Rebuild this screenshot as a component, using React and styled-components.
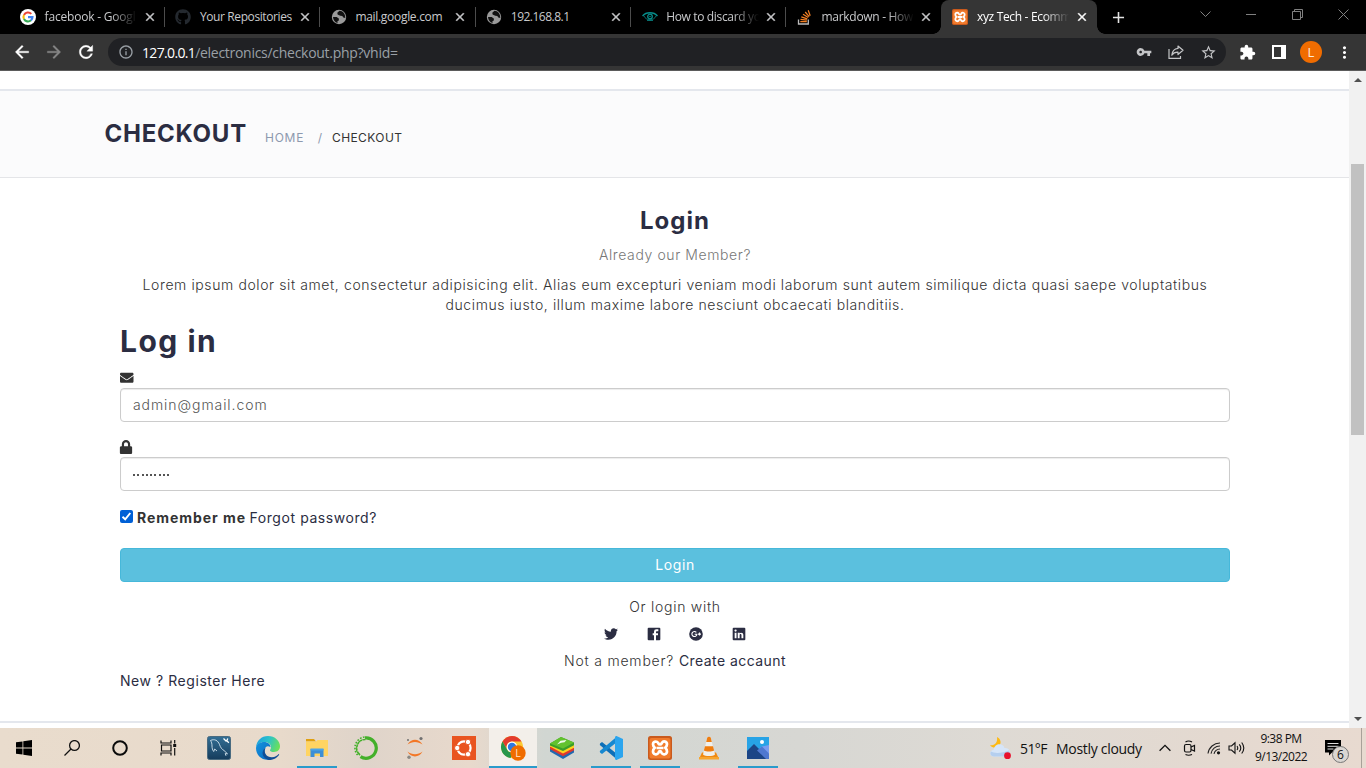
import React from "react";
import styled, { createGlobalStyle } from "styled-components";
import { FaGithub, FaEnvelope, FaLock, FaTwitter } from "react-icons/fa";
import { MdVpnKey, MdExtension, MdStarBorder, MdRefresh, MdArrowBack, MdArrowForward, MdClose, MdAdd, MdMoreVert, MdInfoOutline } from "react-icons/md";

const GlobalStyle = createGlobalStyle`
  * { box-sizing: border-box; }
  body { margin: 0; overflow: hidden; background: #fff; }
  svg { display: block; flex: none; }
`;

const ui = `"Open Sans", "Noto Sans", sans-serif`;
const brand = `Inter, "Open Sans", sans-serif`;

const Screen = styled.div`
  width: 1366px;
  height: 768px;
  display: flex;
  flex-direction: column;
  overflow: hidden;
`;

/* ---------- browser chrome ---------- */
const TabStrip = styled.div`
  height: 34px;
  background: #000;
  display: flex;
  padding-left: 9px;
  font-family: ${ui};
`;
const Tab = styled.div`
  width: 155.4px;
  flex: none;
  height: 34px;
  padding: 0 7px 0 11px;
  display: flex;
  align-items: center;
  position: relative;
  color: ${(p) => (p.$active ? "#fff" : "#c9cacc")};
  background: ${(p) => (p.$active ? "#353535" : "transparent")};
  border-radius: 8px 8px 0 0;
  &::before, &::after {
    content: "";
    display: ${(p) => (p.$active ? "block" : "none")};
    position: absolute;
    bottom: 0;
    width: 8px;
    height: 8px;
  }
  &::before { left: -8px; background: radial-gradient(circle at 0 0, transparent 7.5px, #353535 8px); }
  &::after { right: -8px; background: radial-gradient(circle at 100% 0, transparent 7.5px, #353535 8px); }
`;
const TabDivider = styled.i`
  position: absolute;
  right: -0.5px;
  top: 7px;
  width: 1px;
  height: 20px;
  background: #4c4c4c;
`;
const TabIcon = styled.span`
  width: 16px;
  height: 16px;
  margin-right: 8px;
  display: grid;
  place-items: center;
`;
const TabTitle = styled.span`
  width: 93px;
  padding-left: 0.6px;
  font-size: 12px;
  line-height: 18px;
  letter-spacing: ${(p) => p.$ls}px;
  white-space: nowrap;
  margin-top: -1px;
  mask-image: ${(p) => (p.$fade ? "linear-gradient(90deg, #000 72%, transparent 100%)" : "none")};
`;
const TabClose = styled.span`
  margin-left: 5.5px;
  width: 12px;
  display: grid;
  place-items: center;
  path:not([fill="none"]) { stroke: currentColor; stroke-width: 0.8; }
`;
const NewTab = styled.div`
  width: 28px;
  margin-left: 8px;
  display: grid;
  place-items: center;
  color: #e4e4e4;
`;
const WindowButtons = styled.div`
  margin-left: auto;
  width: 184px;
  height: 28px;
  display: grid;
  grid-template-columns: repeat(4, 46px);
  place-items: center;
  svg { fill: none; stroke: #808080; stroke-width: 1; }
`;
const Toolbar = styled.div`
  height: 37px;
  flex: none;
  background: #353535;
  border-bottom: 1px solid #5b5b5b;
  display: flex;
  align-items: center;
  padding: 0 12px;
  color: #fff;
  font-family: ${ui};
`;
const NavButton = styled.span`
  width: 32px;
  margin-left: ${(p) => (p.$first ? -6 : 0)}px;
  display: grid;
  place-items: center;
  color: ${(p) => (p.$dim ? "#868686" : "#fff")};
  path:not([fill="none"]) { stroke: currentColor; stroke-width: 0.4; }
`;
const AddressBar = styled.div`
  width: 1118px;
  flex: none;
  height: 28px;
  margin-left: 6px;
  border-radius: 14px;
  background: #202124;
  display: flex;
  align-items: center;
  padding: 0 9px 0 10px;
  color: #9aa0a6;
`;
const Host = styled.span`
  color: #fff;
  font-size: 14px;
  letter-spacing: -0.66px;
  margin-left: 8px;
`;
const Path = styled.span`
  font-size: 14px;
  letter-spacing: -0.28px;
`;
const AddressTools = styled.div`
  margin-left: auto;
  display: flex;
  gap: 16px;
  color: #c4c5c7;
`;
const ToolbarEnd = styled.div`
  display: flex;
  align-items: center;
  margin-left: 13px;
`;
const Extension = styled.span`
  margin-right: 16px;
`;
const Avatar = styled.span`
  width: 22px;
  height: 22px;
  margin: 0 13px 0 14px;
  border-radius: 50%;
  background: #f06c00;
  color: #ffe9d6;
  font: 13px/22px ${ui};
  text-align: center;
`;

/* ---------- page ---------- */
const Viewport = styled.div`
  height: 657px;
  display: flex;
  background: #fff;
`;
const Page = styled.main`
  flex: 1;
  font-family: ${brand};
  font-size: 14px;
  line-height: 20px;
  color: #333;
`;
const HeaderEdge = styled.div`
  height: 20px;
  border-bottom: 2px solid #e4e7ed;
`;
const Breadcrumb = styled.section`
  height: 87px;
  padding: 1px 0 0 104.500px;
  background: #fbfbfc;
  border-bottom: 1px solid #e4e5e8;
  display: flex;
  align-items: baseline;
`;
const PageTitle = styled.h3`
  width: 160.500px;
  margin: 0;
  font-weight: 700;
  font-size: 24px;
  line-height: 84px;
  letter-spacing: 0.75px;
  color: #2b2d42;
`;
const Crumb = styled.span`
  font-size: 12px;
  letter-spacing: ${(p) => p.$ls || 0}px;
  color: ${(p) => (p.$current ? "#333" : "#8d99ae")};
  margin-right: ${(p) => p.$gap || 0}px;
`;
const Content = styled.section`
  width: 1110px;
  margin-left: 120px;
  height: 543px;
  padding-top: 30px;
  display: flex;
  flex-direction: column;
`;
const Heading = styled.h3`
  margin: 0;
  font-weight: ${(p) => (p.$large ? 700 : 650)};
  font-size: ${(p) => (p.$large ? 30 : 24)}px;
  line-height: ${(p) => (p.$large ? 34 : 26)}px;
  letter-spacing: ${(p) => (p.$large ? 1.5 : 1)}px;
  text-align: ${(p) => (p.$large ? "left" : "center")};
  color: #2b2d42;
  margin-top: ${(p) => (p.$large ? 9 : 0)}px;
`;
const Line = styled.p`
  margin: ${(p) => p.$top || 0}px 0 0;
  text-align: ${(p) => p.$align || "center"};
  font-weight: 300;
  letter-spacing: ${(p) => p.$ls || 0.6}px;
  white-space: nowrap;
  color: ${(p) => (p.$muted ? "#777" : "#333")};
`;
const Anchor = styled.a`
  font-weight: 400;
  letter-spacing: ${(p) => p.$ls}px;
  color: #2b2d42;
`;
const FieldIcon = styled.span`
  height: 20px;
  margin-top: ${(p) => p.$top}px;
  margin-left: ${(p) => p.$left || 0}px;
  display: flex;
  align-items: center;
  color: #333;
`;
const Field = styled.div`
  height: 34px;
  border: 1px solid #ccc;
  border-radius: 4px;
  box-shadow: inset 0 1px 1px rgba(0, 0, 0, 0.075);
  padding: 6px 12px;
  font-weight: 300;
  letter-spacing: 0.93px;
  color: #555;
`;
const Dots = styled.span`
  display: flex;
  gap: 2.25px;
  margin-top: 10px;
  i { width: 2px; height: 2px; background: #555; }
`;
const RememberRow = styled.div`
  height: 20px;
  margin-top: 17px;
  display: flex;
  align-items: center;
`;
const Checkbox = styled.span`
  width: 13px;
  height: 13px;
  margin: -3px 4px 0 0;
  border-radius: 2px;
  background: #0060d6;
  display: grid;
  place-items: center;
`;
const Remember = styled.b`
  letter-spacing: 0.95px;
  font-weight: 700;
  margin-right: 3.5px;
`;
const LoginButton = styled.button`
  height: 34px;
  flex: none;
  margin-top: 20px;
  border: 1px solid #46b8da;
  border-radius: 4px;
  background: #5bc0de;
  color: #fff;
  font: 400 14px/20px ${brand};
  letter-spacing: 0.6px;
`;
const Social = styled.div`
  height: 20px;
  margin-top: 7px;
  padding-left: 1px;
  display: flex;
  justify-content: center;
  align-items: center;
  gap: 27.700px;
  color: #2b2d42;
`;
const FooterEdge = styled.div`
  height: 2px;
  background: #e4e7ed;
`;
const Scrollbar = styled.div`
  width: 17px;
  background: #f1f1f1;
  display: flex;
  flex-direction: column;
  align-items: center;
`;
const Thumb = styled.div`
  width: 13px;
  height: 271px;
  margin: 82px 0 auto;
  background: #c1c1c1;
`;
const Arrow = styled.i`
  width: 0;
  height: 0;
  margin: ${(p) => (p.$up ? "7px 0 0" : "0 0 7px")};
  border: 4px solid transparent;
  border-top: ${(p) => (p.$up ? "0" : "4px solid #505050")};
  border-bottom: ${(p) => (p.$up ? "4px solid #505050" : "0")};
`;

/* ---------- taskbar ---------- */
const Taskbar = styled.footer`
  height: 40px;
  display: flex;
  font-family: ${ui};
  color: #111;
  background: linear-gradient(90deg, #e9dccd 0, #e8dacb 280px, #dfd4ca 365px, #e8d9cc 470px, #d1d6d2 545px, #d7d7d3 800px, #dedad4 1000px, #e4d9d0 1220px, #e8dad0 100%);
`;
const SystemButton = styled.div`
  width: 48px;
  display: grid;
  place-items: center;
`;
const AppButton = styled.div`
  width: 48px;
  margin-right: 1px;
  display: grid;
  place-items: center;
  background: ${(p) => (p.$active ? "#f3efea" : "transparent")};
  position: relative;
  &::after {
    content: "";
    display: ${(p) => (p.$open ? "block" : "none")};
    position: absolute;
    bottom: 0;
    left: ${(p) => (p.$active ? 0 : 4)}px;
    right: ${(p) => (p.$active ? 0 : 4)}px;
    height: 2px;
    background: #2a9bcb;
  }
`;
const Apps = styled.div`
  display: flex;
  margin-left: 3px;
`;
const Tray = styled.div`
  display: flex;
  align-items: center;
  margin-left: auto;
`;
const Weather = styled.div`
  display: flex;
  align-items: center;
  font-size: 14px;
  letter-spacing: -0.3px;
  white-space: nowrap;
`;
const Temp = styled.span`
  width: 36px;
  margin-left: 8px;
  letter-spacing: -0.6px;
`;
const Summary = styled.span`
  width: 100px;
`;
const TrayIcons = styled.div`
  display: flex;
  align-items: center;
`;
const TrayIcon = styled.span`
  width: ${(p) => p.$w}px;
  display: grid;
  place-items: center;
`;
const Clock = styled.div`
  width: 62px;
  font-size: 12px;
  line-height: 18px;
  text-align: center;
  letter-spacing: -0.52px;
  white-space: nowrap;
`;
const Notifications = styled.div`
  width: 48px;
  height: 40px;
  margin-left: 1px;
  padding: 12px 0 0 12px;
  position: relative;
`;
const Count = styled.span`
  position: absolute;
  left: 19px;
  top: 18px;
  width: 17px;
  height: 17px;
  border-radius: 50%;
  border: 1px solid #777;
  background: #dad6d2;
  font: 12px/15px ${ui};
  text-align: center;
`;
const DesktopEdge = styled.i`
  width: 5px;
  height: 40px;
  border-left: 1px solid #a9a199;
`;

/* ---------- drawings ---------- */
const Google = () => (
  <svg width="16" height="16" viewBox="0 0 16 16" fill="none" strokeWidth="2.1">
    <circle cx="8" cy="8" r="8" fill="#fff" />
    <path d="M11.3 4.9A4.5 4.5 0 0 0 4 6" stroke="#ea4335" />
    <path d="M4 5.9a4.5 4.5 0 0 0 0 4.2" stroke="#fbbc05" />
    <path d="M4 10a4.5 4.5 0 0 0 7 1.3" stroke="#34a853" />
    <path d="M8 8.1h4.5c0 1.400-.5 2.400-1.500 3.300" stroke="#4285f4" />
  </svg>
);
const Globe = () => (
  <svg width="16" height="16" viewBox="0 0 16 16">
    <circle cx="8" cy="8" r="7.200" fill="#9a9a9a" />
    <path d="M8.500 1.800L6.300 3.800l.3 1.700 2.700 1.300 2 .1 1 1.600 2 .4c.1-3-1.500-5.600-3.500-6.600zM2 7.900l3.700.2 2.300 1.600-.4 2-1.200.6.2 1.600C3.800 13.100 2.100 10.800 2 7.900z" fill="#111" />
  </svg>
);
const Eye = () => (
  <svg width="16" height="12" viewBox="0 0 16 12" fill="none" stroke="#078d8b">
    <path d="M.5 5C4 .7 12 .7 15.500 5" strokeWidth="1.500" />
    <path d="M2 5c2 5 10 5 12 0" strokeWidth=".8" />
    <circle cx="8" cy="5.500" r="2.300" strokeWidth="1.300" />
    <circle cx="8" cy="5.500" r=".8" fill="#078d8b" stroke="none" />
    <path d="M5 9.500h6" strokeWidth=".8" />
  </svg>
);
const StackOverflow = () => (
  <svg width="16" height="16" viewBox="0 0 16 16" fill="none">
    <path d="M1.500 10.500v4.500h9.800v-4.500" stroke="#bcbbbb" strokeWidth="1.300" />
    <path d="M3.300 12.700h6.500M3.500 10.400l6.300.8M4.300 7.900l6 1.900M6 5.200l5.300 3.300M8.200 3l4 4.600M11.200 1.300l2 5.400" stroke="#f48024" strokeWidth="1.250" />
  </svg>
);
const Xampp = ({ size }) => (
  <svg width={size} height={size} viewBox="0 0 24 24">
    <rect width="24" height="24" rx="2.500" fill="#c95a1d" />
    <rect x="1.500" y="2" width="21" height="20.500" rx="2" fill="#f17b2c" />
    <path d="M7.700 5.500a2.700 2.700 0 0 0-2.700 2.700c0 1.700.900 2.800 1.800 3.600C5.700 12.700 5 13.800 5 15.500a2.900 2.900 0 0 0 5.400 1.400c.5-.9.300-1.700 1.600-1.700s1.100.8 1.600 1.700a2.900 2.900 0 0 0 5.400-1.400c0-1.700-.7-2.800-1.800-3.700.900-.8 1.800-1.900 1.800-3.600a2.700 2.700 0 0 0-5-1.400c-.5.800-.6 1.600-2 1.600s-1.500-.8-2-1.600a2.700 2.700 0 0 0-2.300-1.300zM8.500 12h7" fill="none" stroke="#fff" strokeWidth="2.700" strokeLinejoin="round" />
  </svg>
);
const Share = () => (
  <svg width="16" height="16" viewBox="0 0 16 16" fill="none" stroke="#c4c5c7" strokeWidth="1.200">
    <path d="M1 5v9.400h11.500V12" />
    <path d="M10 2l5 4.300-5 4.200V8.200C7 8.100 5.200 9 3.800 11.200 4.200 7.500 6 4.800 10 4.400z" strokeLinejoin="round" />
  </svg>
);
const SidePanel = () => (
  <svg width="14" height="14" viewBox="0 0 14 14">
    <path d="M0 0h14v14H0z" fill="#fff" />
    <path d="M2 2h7v10H2z" fill="#353535" />
  </svg>
);
const FacebookBox = () => (
  <svg width="16" height="16" viewBox="0 0 24 24" fill="currentColor">
    <path d="M4 2.500H20A1.500 1.500 0 0 1 21.500 4V20A1.500 1.500 0 0 1 20 21.500H4A1.500 1.500 0 0 1 2.500 20V4A1.500 1.500 0 0 1 4 2.500M18.500 5H15.500A3.500 3.500 0 0 0 12 8.500V11H10V14H12V21.500H15V14H18V11H15V9A1 1 0 0 1 16 8H18.500V5Z" />
  </svg>
);
const GooglePlus = () => (
  <svg width="14" height="14" viewBox="0 0 14 14" fill="none">
    <circle cx="7" cy="7" r="6.800" fill="#2b2d42" />
    <path d="M7.300 5.400A2.500 2.500 0 1 0 7.900 7.200H5.600M9 7.100h3M10.500 5.600v3" stroke="#fff" strokeWidth="1.150" />
  </svg>
);
const LinkedinBox = () => (
  <svg width="16" height="16" viewBox="0 0 24 24" fill="currentColor">
    <path d="M20 2.500A1.500 1.500 0 0 1 21.500 4V20A1.500 1.500 0 0 1 20 21.500H4A1.500 1.500 0 0 1 2.500 20V4A1.500 1.500 0 0 1 4 2.500H20M18.500 18.500V13.200A3.260 3.260 0 0 0 15.240 9.940C14.390 9.940 13.400 10.460 12.920 11.240V10.130H10.130V18.500H12.920V13.570C12.920 12.800 13.540 12.170 14.310 12.170A1.400 1.400 0 0 1 15.710 13.570V18.500H18.500M6.880 8.560A1.680 1.680 0 0 0 8.560 6.880C8.560 5.950 7.810 5.190 6.880 5.190A1.690 1.690 0 0 0 5.190 6.880C5.190 7.810 5.950 8.560 6.880 8.560M8.270 18.500V10.130H5.500V18.500H8.270Z" />
  </svg>
);
const Windows = () => (
  <svg width="16" height="16" viewBox="0 0 16 16">
    <path d="M0 2.300l6.500-.9v6.200H0zM7.300 1.200L16 0v7.600H7.300zM0 8.400h6.500v6.200L0 13.700zM7.300 8.400H16V16l-8.700-1.200z" />
  </svg>
);
const Search = () => (
  <svg width="16" height="16" viewBox="0 0 16 16" fill="none" stroke="#111" strokeWidth="1.300">
    <circle cx="10.500" cy="5.500" r="4.900" />
    <path d="M7 9L.5 15.500" />
  </svg>
);
const Cortana = () => (
  <svg width="16" height="16" viewBox="0 0 16 16" fill="none" stroke="#0b0b0b" strokeWidth="2">
    <circle cx="8" cy="8" r="6.800" />
  </svg>
);
const TaskView = () => (
  <svg width="17" height="16" viewBox="0 0 17 16" fill="none" stroke="#111" strokeWidth="1.200">
    <path d="M1 .5v2.500h10V.5M1 15.500V13h10v2.500M1.500 5h9.500v6H1.500zM14.700 0v3.500M14.700 8v7.500" />
    <path d="M13.200 4h3v3h-3z" fill="#111" stroke="none" />
  </svg>
);
const Workbench = () => (
  <svg width="24" height="24" viewBox="0 0 24 24">
    <defs><linearGradient id="wb" x2="0" y2="1"><stop stopColor="#336f95" /><stop offset="1" stopColor="#153c5c" /></linearGradient></defs>
    <rect x=".5" y=".5" width="23" height="23" rx="2" fill="url(#wb)" stroke="#4a6b80" />
    <path d="M3.500 4.500c4-2 7.500 0 9 4 1 3 2.500 5 4.500 6l3.500 3.300-2.300-.2.800 2.200M3.500 4.500c1 1.500 1.500 3 1.500 5.500 0 2 .5 4 1.700 5.500l1-2.500 2.300 2" fill="none" stroke="#d5e4ee" strokeWidth=".9" />
    <path d="M16.500 2.500l3 3M20.800 2.500l-1 2.200 2 2" fill="none" stroke="#fff" strokeWidth="1.300" />
  </svg>
);
const Edge = () => (
  <svg width="24" height="24" viewBox="0 0 24 24">
    <defs>
      <linearGradient id="e1" x1="0" y1=".2" x2="1" y2=".5"><stop stopColor="#1b9de2" /><stop offset=".5" stopColor="#2cc3c9" /><stop offset="1" stopColor="#6ae05a" /></linearGradient>
      <linearGradient id="e2" x2="1" y2="1"><stop stopColor="#1494df" /><stop offset="1" stopColor="#0b66bd" /></linearGradient>
    </defs>
    <path d="M0 11.500C.5 4.500 5.500 0 12 0c7 0 12 5 12 10.300 0 3.700-2.800 5.700-6 5.700-2.500 0-4-.8-4-1.800 0-.7 1-1.200 1-3C15 8.500 12.500 6 8.500 6 4 6 1 8.500 0 11.500z" fill="url(#e1)" />
    <path d="M0 12c.4-4 4.500-6 8-6 4 0 6.500 2.500 6.500 5.200C12 9 8.500 10.500 8.500 14.500c0 4 3 7.500 6.500 8.800C7 25.500 0 20 0 12z" fill="url(#e2)" />
    <path d="M9.500 12c-2.500 5 1.500 9.500 6.500 9.300 3-.1 5.200-1.500 6.500-3 .5-.6.900-.2.500.6C21 22 17 24 12.500 24 8 22.500 5.500 18.500 7 15c.5-1.500 1.300-2.400 2.500-3z" fill="#124d96" />
  </svg>
);
const Explorer = () => (
  <svg width="22" height="20" viewBox="0 0 22 20">
    <path d="M0 1h8l2 2.500H0z" fill="#e0a010" />
    <path d="M0 3.500h10L11.500 2H22v16H0z" fill="#ffd462" />
    <path d="M4.500 19v-8h13v8h-3.500v-3.500H8.500V19z" fill="#3c8fd6" />
    <path d="M4.500 10.500h13v2h-13z" fill="#4ba4e8" />
  </svg>
);
const Anaconda = () => (
  <svg width="24" height="24" viewBox="0 0 24 24" fill="none" stroke="#43b02a">
    <path d="M11 1.900a10.200 10.200 0 1 1-4.500 18.700" strokeWidth="3.200" />
    <path d="M11.500 3.500A8.700 8.700 0 0 0 6 19" strokeWidth="1.600" />
    <path d="M10.500 1A11 11 0 0 0 4.500 20" strokeWidth="1.600" strokeDasharray="1.600 1.500" />
    <path d="M9 4A9 9 0 0 0 4 16" strokeWidth="1" stroke="#e4d7cb" strokeDasharray="1 2.200" />
  </svg>
);
const Jupyter = () => (
  <svg width="20" height="24" viewBox="0 0 20 24">
    <path d="M2.500 8.500C6 2 14 2 17.500 8.500 13 5 7 5 2.500 8.500zM2.500 15.500C6 22 14 22 17.500 15.500 13 19 7 19 2.500 15.500z" fill="#f37726" />
    <circle cx="16" cy="2.500" r="1.600" fill="#707070" /><circle cx="4" cy="21.200" r="1.700" fill="#8b8883" /><circle cx="3" cy="4" r="1" fill="#707070" />
  </svg>
);
const Ubuntu = () => (
  <svg width="24" height="24" viewBox="0 0 24 24">
    <path d="M0 0h24v24H0z" fill="#e95420" />
    <circle cx="12" cy="12" r="6.600" fill="none" stroke="#fff" strokeWidth="2.200" />
    {[[5.200, 12], [16, 6], [16, 18.200]].map(([x, y]) => <circle key={x + "-" + y} cx={x} cy={y} r="2.700" fill="#fff" stroke="#e95420" strokeWidth=".9" />)}
  </svg>
);
const Chrome = () => (
  <svg width="26" height="26" viewBox="0 0 26 26">
    <circle cx="12" cy="12" r="11" fill="#fcc934" />
    <path d="M2.500 6.500A11 11 0 0 1 21.500 6.500H12a5.500 5.500 0 0 0-4.800 8.200z" fill="#e33b2e" />
    <path d="M2.500 6.500l4.700 8.200A5.500 5.500 0 0 0 14 17l-3.500 6A11 11 0 0 1 2.500 6.500z" fill="#27964b" />
    <circle cx="12" cy="12" r="5.400" fill="#fff" /><circle cx="12" cy="12" r="4.200" fill="#3178e0" />
    <circle cx="18" cy="18" r="7.700" fill="#f06c00" />
    <text x="18" y="22" textAnchor="middle" fontFamily="Open Sans" fontSize="10.500" fill="#ffe6cf">L</text>
  </svg>
);
const BlueStacks = () => (
  <svg width="24" height="24" viewBox="0 0 24 24">
    <path d="M0 15.500l13 7.500 11-6.500v-3L0 13z" fill="#2268b0" />
    <path d="M0 13l13 7.300 11-6v-2.500L0 10.500z" fill="#e03a2d" />
    <path d="M0 10.500l13 7 11-5.700V9L0 8.500z" fill="#fdd11f" />
    <path d="M0 7.500L11 1l13 5.500v2.700L13 15 0 9.500z" fill="#3a9e2a" />
    <path d="M0 7.500L11 1l13 5.500-11 6z" fill="#62c22e" />
    <path d="M7 8.500l3.500-3.800 6-.7-2 2.300-3.300.4z" fill="#effae9" />
  </svg>
);
const VsCode = () => (
  <svg width="24" height="24" viewBox="0 0 24 24">
    <path d="M1 7.500l2-1.500 15 12v5.500L.8 9z" fill="#0d6fb8" />
    <path d="M1 16.500L3 18 18 6V.5L.8 15z" fill="#1688d0" />
    <path d="M17.500 0L24 3v18l-6.500 3c-1 0-1.500-.7-1.500-1.500v-21C16 .700 16.500 0 17.500 0z" fill="#2ba5ee" />
  </svg>
);
const Vlc = () => (
  <svg width="22" height="24" viewBox="0 0 22 24">
    <path d="M4 16.500h14l3 6.500H1z" fill="#f08a12" />
    <path d="M9.500 1h3l4.500 17.500c-2 2-10 2-12 0z" fill="#f1f0ec" />
    <path d="M9.300 1.500c.5-1 2.900-1 3.400 0L13.800 6H8.200zM7 10.200h8l1.100 4.300c-2.500 1.300-7.700 1.300-10.200 0z" fill="#ef7d10" />
    <path d="M1 21h20v2.500H1z" fill="#f7a52e" />
  </svg>
);
const Photos = () => (
  <svg width="22" height="22" viewBox="0 0 22 22">
    <path d="M0 0h22v22H0z" fill="#27a3e6" />
    <path d="M22 8v12l-9-9 2-1.500z" fill="#7a9cf0" />
    <path d="M0 14L7 7l15 15H0z" fill="#1c4586" />
    <path d="M10 13.500l5-4 7 7V22h-3z" fill="#4f78d0" />
    <circle cx="15" cy="5" r="2" fill="#fff" />
  </svg>
);
const CloudMoon = () => (
  <svg width="24" height="24" viewBox="0 0 24 24">
    <path d="M9 1c3.500 1.500 5 6 2 9-2.500 2.500-7 2-9-.7C7.500 9.500 9.800 6 9 1z" fill="#fdb913" />
    <path d="M6 20.500c-5 0-5-6.500-.3-6.800C6.500 7 15 6.500 16.500 12c5-.5 6.500 4 4.500 6.500-1 1.500-2 2-4 2z" fill="#d6e5f8" />
    <path d="M6 20.500c-3 0-4.500-3-3-5 3 2 11 2 18-1 1.300 3 0 6-4 6z" fill="#b5cfef" />
    <circle cx="19.500" cy="19.700" r="3.400" fill="#e8112d" />
  </svg>
);

const tabs = [
  { title: "facebook - Googl", icon: <Google />, ls: -0.2, fade: true },
  { title: "Your Repositories", icon: <FaGithub size={16} color="#24292f" />, ls: -0.4 },
  { title: "mail.google.com", icon: <Globe />, ls: -0.3 },
  { title: "192.168.8.1", icon: <Globe />, ls: -0.5 },
  { title: "How to discard yo", icon: <Eye />, ls: -0.34, fade: true },
  { title: "markdown - How", icon: <StackOverflow />, ls: -0.3, fade: true },
  { title: "xyz Tech - Ecomm", icon: <Xampp size={16} />, ls: -0.33, fade: true, active: true },
];

const apps = [
  { icon: <Workbench /> },
  { icon: <Edge /> },
  { icon: <Explorer />, open: true },
  { icon: <Anaconda /> },
  { icon: <Jupyter /> },
  { icon: <Ubuntu /> },
  { icon: <Chrome />, open: true, active: true },
  { icon: <BlueStacks /> },
  { icon: <VsCode />, open: true },
  { icon: <Xampp size={24} />, open: true },
  { icon: <Vlc /> },
  { icon: <Photos />, open: true },
];

export default function App() {
  return (
    <Screen>
      <GlobalStyle />
      <TabStrip>
        {tabs.map((t, i) => (
          <Tab key={t.title} $active={t.active}>
            <TabIcon>{t.icon}</TabIcon>
            <TabTitle $ls={t.ls} $fade={t.fade}>{t.title}</TabTitle>
            <TabClose><MdClose size={14} /></TabClose>
            {i < 5 && <TabDivider />}
          </Tab>
        ))}
        <NewTab><MdAdd size={19} /></NewTab>
        <WindowButtons>
          <svg width="11" height="8"><path d="M.5 1.500l5 5 5-5" /></svg>
          <svg width="10" height="3"><path d="M0 1.500h10" /></svg>
          <svg width="11" height="11"><path d="M.5 2.500h8v8h-8zM2.500 2.500v-2h8v8h-2" /></svg>
          <svg width="11" height="11"><path d="M.5.5l10 10M10.500.5l-10 10" /></svg>
        </WindowButtons>
      </TabStrip>
      <Toolbar>
        <NavButton $first><MdArrowBack size={20} /></NavButton>
        <NavButton $dim><MdArrowForward size={20} /></NavButton>
        <NavButton><MdRefresh size={20} /></NavButton>
        <AddressBar>
          <MdInfoOutline size={16} />
          <Host>127.0.0.1</Host>
          <Path>/electronics/checkout.php?vhid=</Path>
          <AddressTools>
            <MdVpnKey size={16} />
            <Share />
            <MdStarBorder size={17} />
          </AddressTools>
        </AddressBar>
        <ToolbarEnd>
          <Extension><MdExtension size={17} /></Extension>
          <SidePanel />
          <Avatar>L</Avatar>
          <MdMoreVert size={19} />
        </ToolbarEnd>
      </Toolbar>

      <Viewport>
        <Page>
          <HeaderEdge />
          <Breadcrumb>
            <PageTitle>CHECKOUT</PageTitle>
            <Crumb $ls={0.75} $gap={13.5}>HOME</Crumb>
            <Crumb $gap={10}>/</Crumb>
            <Crumb $current $ls={0.4}>CHECKOUT</Crumb>
          </Breadcrumb>
          <Content>
            <Heading>Login</Heading>
            <Line $top={11} $muted>Already our Member?</Line>
            <Line $top={10}>Lorem ipsum dolor sit amet, consectetur adipisicing elit. Alias eum excepturi veniam modi laborum sunt autem similique dicta quasi saepe voluptatibus</Line>
            <Line>ducimus iusto, illum maxime labore nesciunt obcaecati blanditiis.</Line>
            <Heading $large>Log in</Heading>
            <FieldIcon $top={10}><FaEnvelope size={13.500} /></FieldIcon>
            <Field>admin@gmail.com</Field>
            <FieldIcon $top={15} $left={-1}><FaLock size={14} /></FieldIcon>
            <Field><Dots>{[..."123456789"].map((n) => <i key={n} />)}</Dots></Field>
            <RememberRow>
              <Checkbox>
                <svg width="11" height="11" viewBox="0 0 11 11" fill="none" stroke="#fff" strokeWidth="1.900"><path d="M1.500 5.800L4.200 8.300 9.300 2" /></svg>
              </Checkbox>
              <Remember>Remember me</Remember>
              <Anchor $ls={0.57}>Forgot password?</Anchor>
            </RememberRow>
            <LoginButton>Login</LoginButton>
            <Line $top={15} $ls={0.72}>Or login with</Line>
            <Social>
              <FaTwitter size={14} />
              <FacebookBox />
              <GooglePlus />
              <LinkedinBox />
            </Social>
            <Line $top={7} $ls={0.8}>Not a member? <Anchor $ls={0.44}>Create accaunt</Anchor></Line>
            <Line $align="left"><Anchor $ls={0.55}>New ? Register Here</Anchor></Line>
          </Content>
          <FooterEdge />
        </Page>
        <Scrollbar>
          <Arrow $up />
          <Thumb />
          <Arrow />
        </Scrollbar>
      </Viewport>

      <Taskbar>
        <SystemButton><Windows /></SystemButton>
        <SystemButton><Search /></SystemButton>
        <SystemButton><Cortana /></SystemButton>
        <SystemButton><TaskView /></SystemButton>
        <Apps>
          {apps.map((a, i) => <AppButton key={i} $open={a.open} $active={a.active}>{a.icon}</AppButton>)}
        </Apps>
        <Tray>
          <Weather>
            <CloudMoon />
            <Temp>51°F</Temp>
            <Summary>Mostly cloudy</Summary>
          </Weather>
          <TrayIcons>
            <TrayIcon $w={18}><svg width="12" height="8" fill="none" stroke="#111" strokeWidth="1.300"><path d="M.6 6.800L6 1.400l5.400 5.400" /></svg></TrayIcon>
            <TrayIcon $w={30}>
              <svg width="13" height="16" viewBox="0 0 13 16" fill="none" stroke="#111" strokeWidth="1.200">
                <rect x="1.500" y="4.500" width="6.500" height="7.500" rx="1.500" /><path d="M8 7l3.500-1.500V11L8 9.500M2.500 2Q5.500 0 9 2M2.500 14.500Q5.500 16 9 14.500" />
              </svg>
            </TrayIcon>
            <TrayIcon $w={20}>
              <svg width="14" height="14" viewBox="0 0 14 14" fill="none" stroke="#222" strokeWidth="1.100">
                <path d="M1 12.500A12 12 0 0 1 13 2M4 12.700A9 9 0 0 1 13 5M7 12.800A6.500 6.500 0 0 1 13 8" /><circle cx="11.500" cy="11.800" r="1.600" fill="#111" stroke="none" />
              </svg>
            </TrayIcon>
            <TrayIcon $w={26}>
              <svg width="18" height="14" viewBox="0 0 18 14" fill="none" stroke="#111" strokeWidth="1.100">
                <path d="M1 5h2.500L7 1.800v10.400L3.500 9H1zM9 5q1.500 2 0 4M11.300 3.300q3 3.700 0 7.400M13.700 1.500q4.200 5.500 0 11" />
              </svg>
            </TrayIcon>
          </TrayIcons>
          <Clock>9:38 PM<br />9/13/2022</Clock>
          <Notifications>
            <svg width="16" height="16" viewBox="0 0 16 16"><path d="M0 0h16v12.500H7L4 15.500v-3H0z" /><path d="M2.500 3.500h11M2.500 6.300h11M2.500 9h6" stroke="#ddd" /></svg>
            <Count>6</Count>
          </Notifications>
          <DesktopEdge />
        </Tray>
      </Taskbar>
    </Screen>
  );
}
